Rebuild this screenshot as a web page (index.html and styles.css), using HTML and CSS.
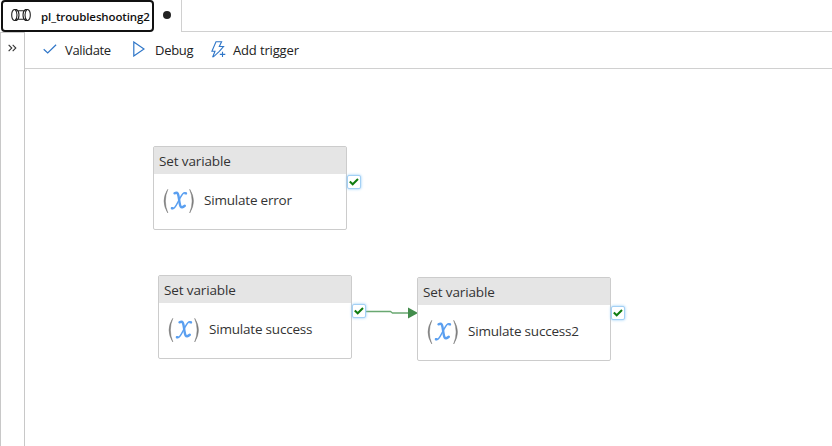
FILE: index.html
```html
<!DOCTYPE html>
<html lang="en">
<head>
<meta charset="utf-8">
<title>pl_troubleshooting2</title>
<link rel="stylesheet" href="styles.css">
</head>
<body>
<svg class="defs" width="0" height="0" aria-hidden="true">
  <symbol id="variable" viewBox="0 0 34 30">
    <path d="M5.800 2.300Q-1.700 14 5.800 26Q.9 14 5.800 2.300M27.700 2.300Q35.200 14 27.700 26Q32.600 14 27.700 2.300" fill="#7d7d7d" stroke="#7d7d7d" stroke-width=".5"/>
    <g fill="none" stroke="#5a9ff0" stroke-linecap="round">
      <path d="M12.500 6.300C16 4.600 16.300 7 17.100 12.500C18 19 18.300 22.300 22.800 18.800" stroke-width="2.400"/>
      <path d="M24.200 6.300C21.500 4.500 19.800 8 17.300 12.500C14.300 18 12.500 22.800 9.700 21.200" stroke-width="1.400"/>
      <path d="M23.500 6.400H24M9.900 21.200H10.500" stroke-width="2.400"/>
    </g>
  </symbol>
</svg>
<div class="app">
  <header class="tabs">
    <div class="tab">
      <div class="tab-focus">
        <svg class="pipe" width="20" height="14" viewBox="0 0 20 14" fill="none" stroke="#222" stroke-width="1.100"><path d="M4 1.500H3.200Q.7 2.500.7 7T3.200 12.500H4M4 1.500Q6 3 6 7T4 12.500M4 1.500H5.500Q8 3 8 7T5.500 12.500H4M7.300 2.800H12.700M7.300 11.200H12.700M16 1.500H14.500Q12 3 12 7T14.500 12.500H16M16 1.500Q14 3 14 7T16 12.500M16 1.500H16.800Q19.300 2.500 19.300 7T16.800 12.500H16"/></svg>
        <span class="tab-name">pl_troubleshooting2</span>
      </div>
      <span class="dirty"></span>
    </div>
    <div class="tab-rest"></div>
  </header>
  <div class="main">
    <aside class="rail"><svg width="9" height="8" viewBox="0 0 10 8" fill="none" stroke="#333" stroke-width="1.200"><path d="M.7.5 4.200 4 .7 7.500M5.200.5 8.700 4 5.200 7.500"/></svg></aside>
    <section class="editor">
      <nav class="toolbar">
        <svg class="i-check" width="14" height="10" viewBox="0 0 14 10" fill="none" stroke="#2f76c8" stroke-width="1.200"><path d="M.7 5.200 4.700 9 13.100.7"/></svg>
        <span class="t-validate">Validate</span>
        <svg class="i-play" width="12" height="16" viewBox="0 0 12 16" fill="none" stroke="#2f76c8" stroke-width="1.200"><path d="M.8 1V15L11 8Z"/></svg>
        <span class="t-debug">Debug</span>
        <svg class="i-bolt" width="15" height="17" viewBox="0 0 15 17" fill="none" stroke="#2f76c8" stroke-width="1.100"><path d="M8.300 10.300 2.500 15.800H1.800L4 10.300H.9L5 .8H10.600L8.300 5.500H12.500L8.300 10.300M11.500 10.700V16M8.800 13.400H14.300"/></svg>
        <span class="t-trigger">Add trigger</span>
      </nav>
      <main class="canvas">
        <svg class="wire" width="54" height="14" viewBox="0 0 54 14"><path d="M0 5.500H25.500L27.500 7H44" fill="none" stroke="#69a871" stroke-width="1.300"/><path d="M43 1.500 53 7 43 12.500Z" fill="#438c4c"/></svg>
        <article class="node n1">
          <h2>Set variable</h2>
          <div class="body"><svg width="34" height="30"><use href="#variable"/></svg><span class="label">Simulate error</span></div>
          <span class="port"><svg width="10" height="8" viewBox="0 0 10 8"><path d="M.8 3.500 3.700 6.300 9 1" fill="none" stroke="#107c10" stroke-width="2"/></svg></span>
        </article>
        <article class="node n2">
          <h2>Set variable</h2>
          <div class="body"><svg width="34" height="30"><use href="#variable"/></svg><span class="label">Simulate success</span></div>
          <span class="port"><svg width="10" height="8" viewBox="0 0 10 8"><path d="M.8 3.500 3.700 6.300 9 1" fill="none" stroke="#107c10" stroke-width="2"/></svg></span>
        </article>
        <article class="node n3">
          <h2>Set variable</h2>
          <div class="body"><svg width="34" height="30"><use href="#variable"/></svg><span class="label">Simulate success2</span></div>
          <span class="port"><svg width="10" height="8" viewBox="0 0 10 8"><path d="M.8 3.500 3.700 6.300 9 1" fill="none" stroke="#107c10" stroke-width="2"/></svg></span>
        </article>
      </main>
    </section>
  </div>
</div>
</body>
</html>
```
FILE: styles.css
```css
* { box-sizing: border-box; }
body { margin: 0; background: #fff; color: #222; font-family: "Open Sans", "Noto Sans", sans-serif; font-size: 13px; }
svg { display: block; flex: none; }
.defs { position: absolute; }
span { white-space: nowrap; }
.app { height: 446px; display: flex; flex-direction: column; overflow: hidden; }
.tabs { height: 32px; display: flex; }
.tab { width: 182px; display: flex; align-items: center; border-right: 1px solid #d0d0d0; padding-left: 1px; }
.tab-focus { width: 153px; height: 32px; border: 2px solid #111; border-radius: 4px; display: flex; align-items: center; padding-left: 8px; }
.pipe { margin-top: -2px; }
.tab-name { margin-left: 10px; font-size: 11.500px; font-weight: 600; letter-spacing: -.12px; color: #111; }
.dirty { width: 8px; height: 8px; border-radius: 50%; background: #222; margin: -2px 0 0 9px; }
.tab-rest { flex: 1; border-bottom: 1px solid #d0d0d0; }
.main { flex: 1; display: flex; }
.rail { width: 25px; border: 1px solid #c8c8c8; border-bottom: 0; padding: 11px 0 0 7px; }
.editor { flex: 1; display: flex; flex-direction: column; }
.toolbar { height: 37px; border-bottom: 1px solid #d0d0d0; display: flex; align-items: center; padding-left: 18px; }
.i-check { margin-top: -3px; }
.i-play { margin: -2px 0 0 22px; }
.i-bolt { margin: -2px 0 0 18px; }
.t-validate { margin-left: 8px; width: 46px; letter-spacing: -.36px; }
.t-debug { margin-left: 10px; width: 38px; letter-spacing: -.3px; }
.t-trigger { margin-left: 7px; letter-spacing: -.15px; }
.canvas { flex: 1; position: relative; }
.node { position: absolute; width: 194px; height: 84px; border: 1px solid #ccc; border-radius: 2px; background: #fff; color: #333; }
.n1 { left: 128px; top: 77px; }
.n2 { left: 133px; top: 206px; }
.n3 { left: 392px; top: 208px; }
.node h2 { margin: 0; height: 27px; padding-left: 5px; background: #e5e5e5; font-size: 13.500px; line-height: 28px; font-weight: 400; letter-spacing: -.13px; }
.body { height: 55px; display: flex; align-items: center; padding-left: 8px; }
.label { margin: -3px 0 0 8px; font-size: 13.500px; letter-spacing: -.2px; }
.port { position: absolute; left: 193px; top: 28px; width: 14px; height: 14px; border: 1px solid #a3d0f5; border-radius: 2px; box-shadow: 0 0 3px #8fc8f5; background: #fff; display: flex; align-items: center; justify-content: center; }
.wire { position: absolute; left: 340px; top: 237px; }
```
